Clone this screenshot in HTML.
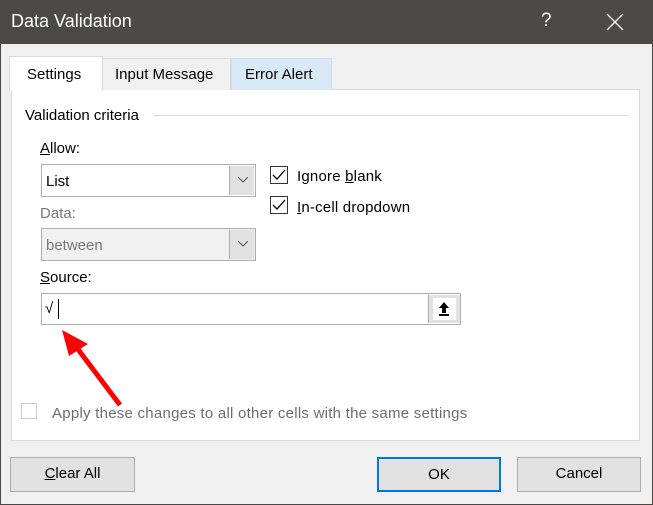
<!DOCTYPE html>
<html><head><style>
*{box-sizing:border-box;margin:0;padding:0}
body{width:653px;height:505px;background:#f0f0f0;font-family:"Liberation Sans",sans-serif;font-size:15px;color:#000;position:relative;overflow:hidden}
.a{position:absolute;white-space:nowrap}
.title{left:0;top:0;width:653px;height:44px;background:#4b4a48;color:#fff}
.combo{background:#fff;border:1px solid #adadad}
.dd{position:absolute;right:1px;top:1px;bottom:1px;width:25px;background:#e1e1e1;border-left:1px solid #adadad}
.cb{width:18px;height:18px;border:1px solid #333;background:#fff}
.btn{background:#e1e1e1;border:1px solid #adadad;text-align:center;line-height:32px}
u{text-decoration:underline}
</style></head><body>
<div class="a" style="left:0;top:0;width:653px;height:505px;border:1px solid #4a4846"></div>
<div class="a title"><span class="a" style="left:11px;top:11px;font-size:18px">Data Validation</span>
<span class="a" style="left:541px;top:10px;font-size:19px">?</span>
<svg class="a" style="left:606px;top:13px" width="18" height="18"><path d="M1 1L17 17M17 1L1 17" stroke="#fff" stroke-width="1.3"/></svg></div>
<div class="a" style="left:11px;top:89px;width:629px;height:352px;background:#fff;border:1px solid #d9d9d9"></div>
<div class="a" style="left:102px;top:58px;width:129px;height:32px;background:#f0f0f0;border:1px solid #d9d9d9;border-bottom:none"></div>
<span class="a" style="left:115px;top:66px">Input Message</span>
<div class="a" style="left:231px;top:58px;width:101px;height:32px;background:#d9e8f6;border:1px solid #ccdce9;border-bottom:none"></div>
<span class="a" style="left:245px;top:66px">Error Alert</span>
<div class="a" style="left:9px;top:56px;width:94px;height:35px;background:#fff;border:1px solid #d9d9d9;border-bottom:none"></div>
<span class="a" style="left:27px;top:66px">Settings</span>
<span class="a" style="left:25px;top:107px">Validation criteria</span>
<div class="a" style="left:154px;top:115px;width:474px;height:1px;background:#d9d9d9"></div>
<span class="a" style="left:40px;top:140px"><u>A</u>llow:</span>
<div class="a combo" style="left:41px;top:164px;width:215px;height:33px"><span class="a" style="left:4px;top:8px">List</span><div class="dd"><svg class="a" style="left:8px;top:11px" width="10" height="6"><path d="M0 0L5 5L10 0" fill="none" stroke="#555"/></svg></div></div>
<span class="a" style="left:40px;top:205px;color:#777">Data:</span>
<div class="a combo" style="left:41px;top:228px;width:215px;height:33px;background:#f0f0f0"><span class="a" style="left:4px;top:8px;color:#777">between</span><div class="dd"><svg class="a" style="left:8px;top:11px" width="10" height="6"><path d="M0 0L5 5L10 0" fill="none" stroke="#555"/></svg></div></div>
<span class="a" style="left:40px;top:269px"><u>S</u>ource:</span>
<div class="a combo" style="left:41px;top:293px;width:420px;height:32px"><span class="a" style="left:3px;top:6px">√</span><div class="a" style="left:16px;top:5px;width:1px;height:20px;background:#000"></div>
<div class="a" style="left:386px;top:1px;width:32px;height:28px;background:#e1e1e1;border-left:1px solid #adadad"><div class="a" style="left:4px;top:3px;width:23px;height:22px;background:#fff"></div><svg class="a" style="left:7px;top:6px" width="16" height="16"><path d="M8 1L3 7H6V12H10V7H13Z" fill="#000"/><rect x="3" y="13" width="10" height="2" fill="#000"/></svg></div></div>
<div class="a cb" style="left:270px;top:166px"></div><svg class="a" style="left:271px;top:167px" width="16" height="16"><path d="M2 8L6 12L14 3" fill="none" stroke="#000" stroke-width="1.3"/></svg>
<span class="a" style="left:297px;top:168px;letter-spacing:0.2px">Ignore <u>b</u>lank</span>
<div class="a cb" style="left:270px;top:196px"></div><svg class="a" style="left:271px;top:197px" width="16" height="16"><path d="M2 8L6 12L14 3" fill="none" stroke="#000" stroke-width="1.3"/></svg>
<span class="a" style="left:297px;top:199px;letter-spacing:0.2px"><u>I</u>n-cell dropdown</span>
<svg class="a" style="left:0;top:0" width="653" height="505"><path d="M120 405L74 344" stroke="#f00" stroke-width="5"/><path d="M62 330L88 344L69 356Z" fill="#f00"/></svg>
<div class="a" style="left:21px;top:403px;width:16px;height:16px;border:1px solid #ccc;background:#fff"></div>
<span class="a" style="left:52px;top:405px;color:#6d6d6d;letter-spacing:0.25px">Apply these changes to all other cells with the same settings</span>
<div class="a btn" style="left:10px;top:457px;width:125px;height:35px"><u>C</u>lear All</div>
<div class="a btn" style="left:377px;top:457px;width:124px;height:35px;border:2px solid #0078d7;line-height:31px">OK</div>
<div class="a btn" style="left:517px;top:457px;width:124px;height:35px">Cancel</div>
</body></html>
